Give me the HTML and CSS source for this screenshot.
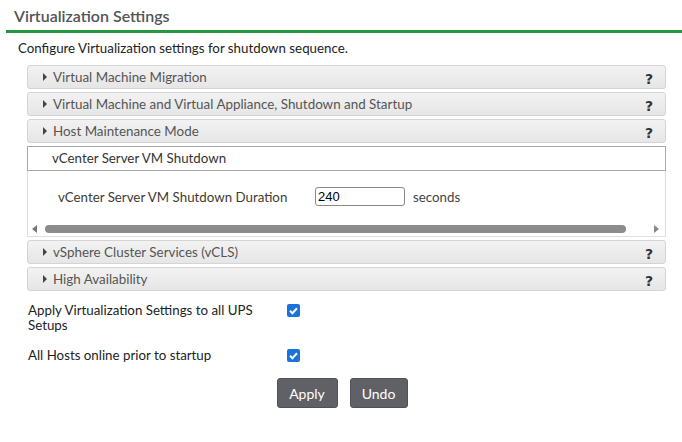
FILE: index.html
```html
<!DOCTYPE html>
<html lang="en">
  <head>
    <meta charset="UTF-8" />
    <title>Virtualization Settings</title>
    <link rel="stylesheet" href="styles.css">
  </head>
  <body>
    <h1 class="page-title">Virtualization Settings</h1>
    <p class="intro">Configure Virtualization settings for shutdown sequence.</p>

    <div class="accordion">
      <div class="panel-head">
        <span class="caret"></span>
        <span class="panel-title">Virtual Machine Migration</span>
        <span class="help">?</span>
      </div>
      <div class="panel-head">
        <span class="caret"></span>
        <span class="panel-title">Virtual Machine and Virtual Appliance, Shutdown and Startup</span>
        <span class="help">?</span>
      </div>
      <div class="panel-head">
        <span class="caret"></span>
        <span class="panel-title">Host Maintenance Mode</span>
        <span class="help">?</span>
      </div>

      <div class="panel-open">
        <div class="open-head">vCenter Server VM Shutdown</div>
        <div class="open-body">
          <div class="field-row">
            <label class="field-label" for="duration">vCenter Server VM Shutdown Duration</label>
            <input type="text" id="duration" class="field-input" value="240" />
            <span class="unit">seconds</span>
          </div>
          <div class="hscroll">
            <span class="arrow-left"></span>
            <span class="thumb"></span>
            <span class="arrow-right"></span>
          </div>
        </div>
      </div>

      <div class="panel-head">
        <span class="caret"></span>
        <span class="panel-title">vSphere Cluster Services (vCLS)</span>
        <span class="help">?</span>
      </div>
      <div class="panel-head">
        <span class="caret"></span>
        <span class="panel-title">High Availability</span>
        <span class="help">?</span>
      </div>
    </div>

    <div class="options">
      <div class="option-row">
        <span class="option-label">Apply Virtualization Settings to all UPS Setups</span>
        <span class="check"><svg width="13" height="13" viewBox="0 0 13 13"><rect width="13" height="13" rx="2" fill="#1a73d9"/><path d="M3 6.8l2.4 2.4L10 4.2" fill="none" stroke="#fff" stroke-width="2"/></svg></span>
      </div>
      <div class="option-row">
        <span class="option-label">All Hosts online prior to startup</span>
        <span class="check"><svg width="13" height="13" viewBox="0 0 13 13"><rect width="13" height="13" rx="2" fill="#1a73d9"/><path d="M3 6.8l2.4 2.4L10 4.2" fill="none" stroke="#fff" stroke-width="2"/></svg></span>
      </div>
    </div>

    <div class="actions">
      <button type="button" class="btn">Apply</button>
      <button type="button" class="btn btn-undo">Undo</button>
    </div>
  </body>
</html>
```

FILE: styles.css
```css
body {
  margin: 0;
  font-family: Lato, "Open Sans", sans-serif;
  color: #222;
  width: 682px;
}
.page-title {
  margin: 0 0 0 6px;
  padding: 6px 8px 4px;
  font-size: 16px;
  font-weight: 600;
  color: #555;
  border-bottom: 3px solid #26963f;
  line-height: 20px;
}
.intro {
  margin: 7px 0 8px 18px;
  font-size: 13.3px;
  line-height: 17px;
}
.accordion {
  margin: 0 16px 0 27px;
}
.panel-head {
  display: flex;
  align-items: center;
  height: 22px;
  margin-bottom: 3px;
  padding: 0 12px 0 15px;
  border: 1px solid #d4d4d4;
  border-radius: 3px;
  background: linear-gradient(#f2f2f2, #ececec 50%, #e6e6e6);
  font-size: 13.4px;
  color: #555;
}
.caret {
  width: 0;
  height: 0;
  border-top: 4px solid transparent;
  border-bottom: 4px solid transparent;
  border-left: 4px solid #444;
  margin-right: 6px;
}
.panel-title {
  flex: 1;
}
.help {
  font-family: "DejaVu Sans", sans-serif;
  font-weight: bold;
  font-size: 14px;
  color: #333;
  padding-top: 3px;
}
.panel-open {
  margin-bottom: 3px;
}
.open-head {
  height: 23px;
  line-height: 22px;
  padding-left: 24px;
  border: 1px solid #a8a8a8;
  font-size: 13.3px;
  color: #333;
}
.open-body {
  border: 1px solid #dedede;
  border-top: none;
}
.field-row {
  display: flex;
  align-items: center;
  height: 51px;
  padding-left: 30px;
  font-size: 13.3px;
}
.field-label {
  width: 257px;
  color: #3f3a33;
}
.field-input {
  width: 84px;
  height: 17px;
  padding: 0 2px;
  border: 1px solid #888;
  border-radius: 3px;
  font-family: "Liberation Sans", Arial, sans-serif;
  font-size: 13px;
  color: #000;
  box-sizing: content-box;
}
.unit {
  margin-left: 8px;
  color: #444;
}
.hscroll {
  display: flex;
  align-items: center;
  height: 14px;
  padding: 0 6px 0 4px;
}
.arrow-left,
.arrow-right {
  width: 0;
  height: 0;
  border-top: 4px solid transparent;
  border-bottom: 4px solid transparent;
}
.arrow-left {
  border-right: 5px solid #777;
}
.arrow-right {
  border-left: 5px solid #888;
}
.thumb {
  flex: 1;
  height: 8px;
  margin: 0 28px 0 8px;
  background: #8c8c8c;
  border-radius: 4px;
}
.options {
  margin: 12px 0 0 28px;
  font-size: 13.3px;
}
.option-row {
  display: flex;
  align-items: flex-start;
  margin-bottom: 15px;
}
.option-label {
  width: 259px;
  line-height: 15px;
}
.check {
  margin-top: 1px;
  height: 13px;
}
.actions {
  display: flex;
  justify-content: center;
  gap: 12px;
  margin-top: 10px;
  padding-left: 2px;
}
.btn {
  width: 61px;
  height: 30px;
  background-color: #606166;
  color: white;
  border: 1px solid #505156;
  border-radius: 3px;
  font-family: Lato, sans-serif;
  font-size: 14px;
  cursor: pointer;
}
.btn-undo {
  width: 58px;
}
```
